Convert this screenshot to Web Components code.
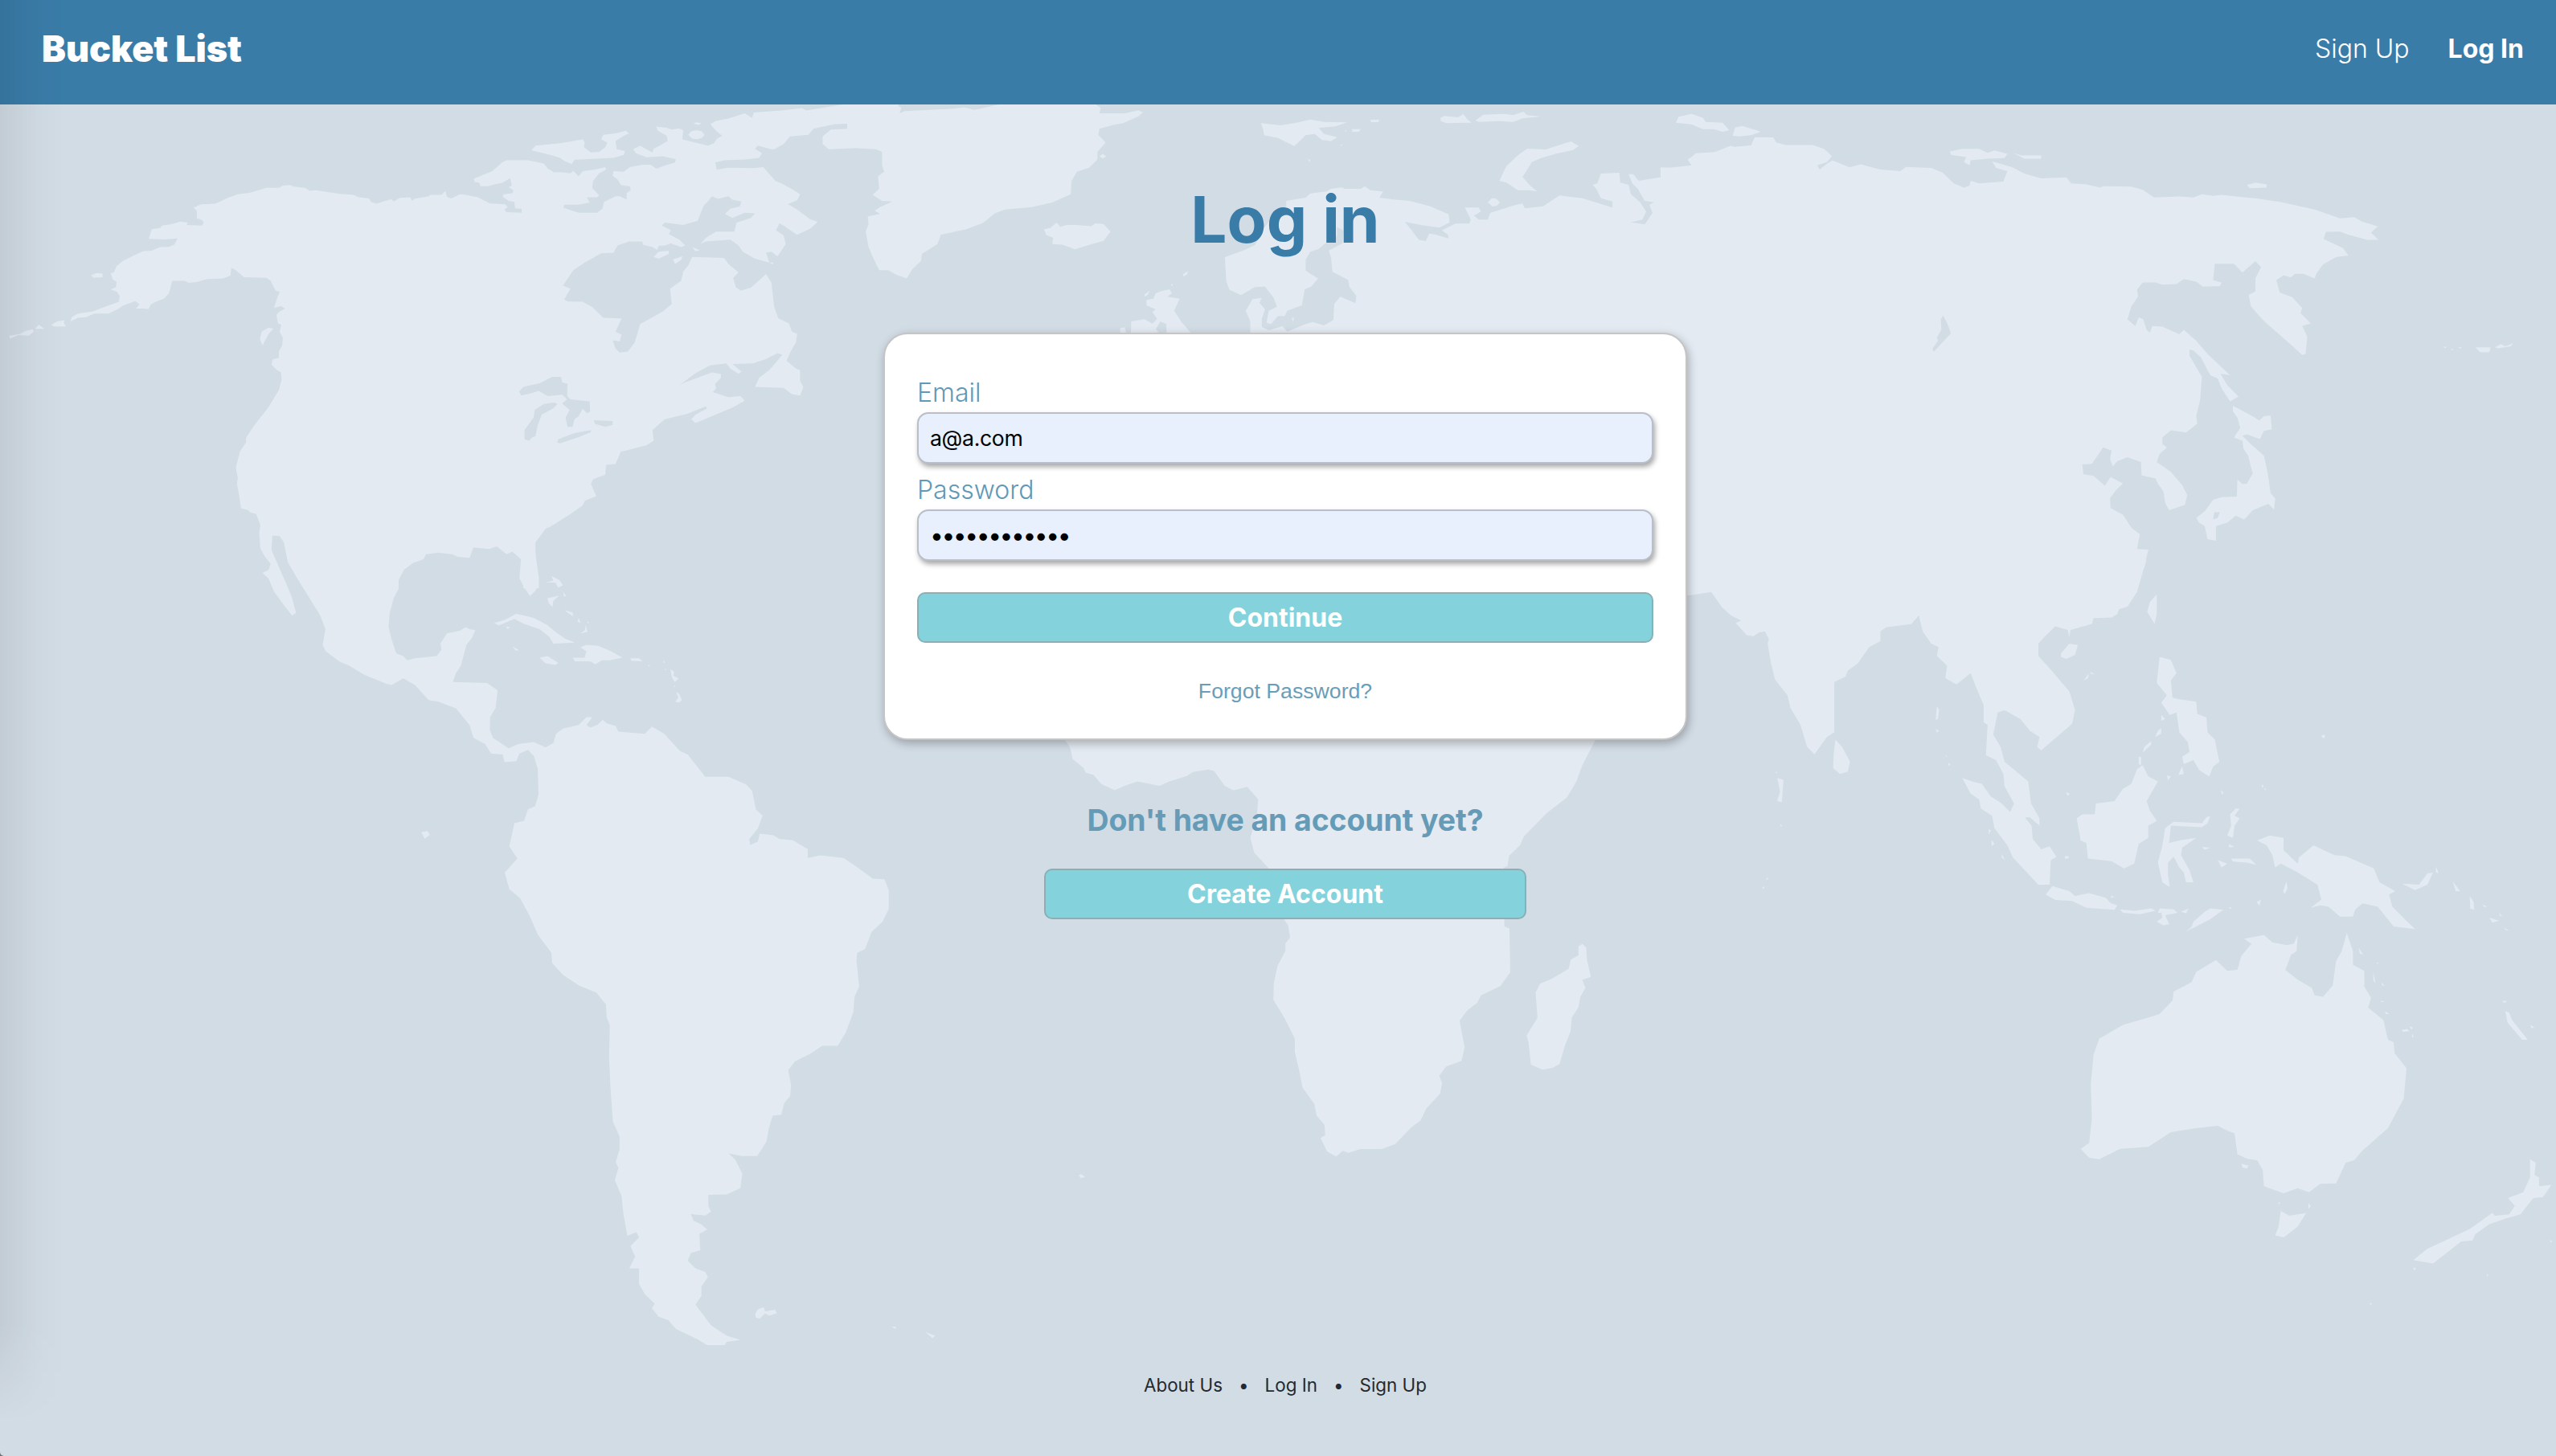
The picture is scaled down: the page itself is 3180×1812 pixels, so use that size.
<!DOCTYPE html>
<html lang="en">
<head>
<meta charset="utf-8">
<title>Bucket List</title>
<style>
html,body{margin:0;height:100%;overflow:hidden;background:#6b7177;font-family:Inter,"Liberation Sans",sans-serif}
</style>
</head>
<body>
<bucket-page>
  <bucket-header slot="header"></bucket-header>
  <login-view slot="main"></login-view>
  <bucket-footer slot="footer"></bucket-footer>
</bucket-page>
<script>
const define=(name,html)=>customElements.define(name,class extends HTMLElement{
  constructor(){super();this.attachShadow({mode:'open'}).innerHTML=html;}
});

define('world-map',`<style>:host{display:block;width:100%;height:100%}svg{display:block}.l{fill:#e3eaf1}.w{fill:#d2dce5}</style>
<svg width="3180" height="1812" viewBox="0 0 3180 1812" aria-hidden="true">
<g class="l" transform="translate(0 120) scale(.510204 .382653)">
<path d="M1290 208L1235 208 1225 214 1200 243 1155 268 1158 278 1168 280 1172 292 1190 292 1210 285 1225 281 1244 266 1248 290 1240 295 1252 305 1250 315 1228 318 1226 326 1240 340 1254 343 1256 364 1272 366 1272 378 1235 376 1230 368 1238 360 1232 351 1195 348 1165 328 1135 320 1122 318 1100 332 1090 326 1086 308 1076 320 1050 320 1045 325 1010 333 1005 340 1000 328 975 330 960 342 955 334 940 340 918 349 905 343 900 332 875 328 862 320 828 317 770 305 755 307 745 298 715 293 708 288 690 290 680 297 650 297 610 313 580 318 555 330 540 340 525 349 490 351 472 362 480 372 480 396 492 402 497 410 492 420 455 418 458 410 440 407 420 415 395 420 390 428 370 432 363 463 400 465 433 462 425 482 410 490 390 490 370 502 350 503 325 518 300 535 284 552 278 572 270 575 275 595 284 603 283 620 270 628 285 635 292 650 290 668 255 685 225 700 190 706 175 718 172 732 190 720 210 718 230 706 265 706 290 690 300 680 330 666 340 676 332 690 350 690 362 692 368 676 385 665 400 658 412 640 420 600 450 600 460 606 480 604 505 594 545 592 562 582 564 558 575 565 595 588 650 590 660 600 672 632 682 635 676 655 668 688 685 682 695 690 680 702 674 710 678 738 686 742 682 765 690 785 688 810 680 830 680 850 665 855 662 872 675 890 685 897 687 920 680 955 655 1010 620 1070 600 1110 600 1125 585 1155 575 1208 580 1240 578 1260 582 1290 588 1340 605 1345 610 1353 625 1358 635 1395 632 1420 635 1470 645 1495 660 1520 655 1540 640 1550 655 1568 668 1610 690 1650 712 1688 722 1680 712 1630 695 1575 680 1530 662 1475 664 1428 682 1430 692 1450 702 1515 725 1568 740 1600 770 1665 784 1694 800 1700 800 1460 1290 1460Z"/>
<path d="M160 745L155 737 158 728 140 732 125 742 130 748 160 748ZM95 742L108 756 85 756ZM80 757L60 764 50 772 22 778 25 788 45 776 70 778 82 765ZM250 576L235 574 222 582 228 590 250 588ZM667 755L655 752 638 765 634 790 640 810 648 790 655 772Z"/>
</g>
<g transform="translate(600 120) scale(.510204 .382653)">
<path class="l" d="M100 208L120 210 150 218 160 235 175 247 195 247 215 250 222 242 235 260 245 243 275 238 300 230 302 238 285 250 270 275 268 298 285 322 280 328 255 328 262 345 235 352 200 352 198 362 235 378 280 378 293 365 297 343 325 325 335 325 352 335 352 315 362 305 360 293 338 288 330 270 318 258 320 243 345 245 360 230 390 222 410 222 425 235 445 225 470 215 472 204 440 195 400 198 375 185 368 172 385 160 400 172 415 182 418 170 430 162 452 145 450 128 428 112 424 98 450 102 462 108 480 104 490 110 488 140 520 150 550 160 565 152 572 138 585 128 570 112 556 90 570 80 600 72 640 55 658 70 662 52 730 46 780 38 790 46 835 36 880 26 900 20 900 88 860 90 808 105 795 125 750 130 735 155 712 172 705 172 672 160 665 170 682 185 675 200 640 205 590 208 568 215 572 238 600 232 660 233 685 230 715 275 730 283 760 305 775 318 768 338 745 350 765 365 785 385 800 400 818 408 800 430 768 450 745 430 735 420 725 413 716 435 735 452 740 480 720 520 705 505 692 508 700 540 665 528 635 505 625 485 605 466 545 472 532 480 545 460 570 440 615 440 620 410 655 395 665 380 640 378 610 395 592 382 605 365 628 358 632 342 610 336 600 325 575 333 560 325 548 345 540 355 525 405 505 412 490 418 445 410 438 420 460 435 455 448 480 465 495 485 485 490 460 478 445 485 430 486 427 500 415 490 392 482 390 472 358 472 330 485 320 508 290 510 250 540 222 565 197 615 215 625 200 660 208 667 245 668 268 685 295 720 340 722 325 765 340 775 335 797 318 793 325 820 335 833 355 830 372 800 385 740 410 722 440 700 462 675 458 625 485 600 490 570 502 550 512 522 590 525 600 545 625 572 612 590 618 620 630 632 655 622 692 578 705 605 712 685 722 722 748 738 755 765 768 772 765 800 752 830 742 860 765 885 775 890 775 925 783 945 775 973 755 968 735 948 665 945 675 915 700 890 732 840 720 835 690 855 660 868 610 870 632 895 625 902 605 885 595 868 555 875 520 900 480 940 495 930 560 898 582 903 582 915 568 935 570 950 562 962 600 978 630 975 640 990 610 1012 520 1062 510 1050 520 1035 548 1015 545 1008 500 1032 445 1050 415 1085 418 1120 400 1135 350 1152 338 1155 325 1195 302 1198 300 1230 270 1245 265 1260 278 1300 250 1315 245 1330 215 1358 165 1400 155 1405 130 1450 128 1480 138 1568 138 1600 100 1600Z"/>
<path class="l" d="M120 175L130 160 190 152 245 140 250 150 248 165 265 182 285 180 300 165 305 150 290 140 295 125 325 120 350 112 358 120 345 128 325 145 328 172 348 178 345 190 320 200 225 206 218 220 200 210 190 200 160 188 135 180ZM418 522L430 505 455 502 455 512 430 528ZM465 530L488 520 485 532 470 545ZM512 490L530 500 520 504ZM700 540L710 540 708 546ZM542 125L535 113 522 110 510 113 502 125 512 137 525 139 535 135ZM514 88L522 84 534 87 528 93ZM1505 195L1513 187 1522 195 1513 202Z"/>
<path class="l" d="M890 20L1015 20 1015 32 1022 36 1018 55 1030 48 1150 40 1175 35 1200 44 1240 36 1280 26 1480 26 1508 38 1505 55 1568 55 1600 45 1611 52 1600 65 1563 87 1540 92 1505 105 1502 125 1520 150 1500 180 1500 205 1480 232 1450 245 1437 275 1435 318 1390 345 1340 360 1275 368 1250 380 1220 412 1180 432 1118 450 1110 480 1072 512 1070 535 1050 560 1035 592 1010 580 990 565 968 565 955 530 942 490 935 440 942 415 940 390 970 382 957 372 970 360 1000 342 975 340 952 320 968 300 965 260 980 245 975 225 975 180 960 172 910 168 845 172 830 155 830 130 850 108 890 105ZM1370 432L1385 428 1400 410 1410 424 1425 418 1450 418 1485 422 1495 413 1515 415 1532 440 1515 470 1475 485 1445 497 1415 482 1390 480 1392 460 1375 450ZM1200 44L1280 20 1490 20 1508 38Z"/>
<path class="w" d="M90 960L100 945 140 933 170 912 192 912 195 930 208 935 207 975 215 985 262 992 263 1025 255 1030 245 1015 235 1040 225 1050 220 1075 208 1075 203 1045 213 1020 195 998 207 985 195 970 160 975 138 958 120 965 95 973ZM183 1000L172 1015 145 1035 135 1070 130 1105 120 1110 115 1120 103 1115 103 1085 125 1045 128 1020 150 1000 175 996ZM183 1125L185 1115 225 1095 265 1085 265 1092 235 1108 190 1128ZM272 1053L318 1056 318 1068 300 1075 275 1065Z"/>
</g>
<g class="l" transform="translate(400 680) scale(.484731 .644122)">
<path d="M-5 -15L548 -15 550 20 558 62 550 85 535 96 525 85 508 62 512 25 490 10 475 15 450 0 430 5 390 2 380 22 350 20 335 15 300 12 268 15 262 25 235 32 212 45 198 65 198 82 185 100 175 130 172 155 180 180 192 207 210 212 220 220 240 216 295 212 308 200 305 188 322 168 355 163 370 156 380 160 395 162 385 178 372 190 358 230 345 245 337 262 425 264 452 278 447 312 433 330 432 355 440 370 480 390 505 382 545 378 575 388 595 380 602 362 620 352 660 345 680 330 695 330 680 345 690 350 708 345 722 335 732 342 755 347 762 358 830 362 848 348 880 362 895 375 920 395 940 402 985 445 1045 445 1090 460 1105 472 1115 508 1132 520 1120 545 1098 565 1100 577 1120 570 1125 555 1160 558 1175 565 1210 568 1248 585 1248 602 1280 597 1340 602 1375 620 1415 642 1445 643 1456 665 1456 700 1440 725 1412 745 1395 778 1375 785 1373 800 1380 850 1368 870 1365 900 1345 940 1325 965 1285 965 1255 980 1215 995 1198 1012 1205 1040 1203 1062 1188 1075 1180 1098 1158 1100 1148 1125 1142 1150 1118 1178 1080 1178 1045 1173 1062 1185 1080 1212 1075 1240 1040 1252 993 1253 993 1275 1000 1285 985 1293 948 1290 955 1303 975 1310 990 1320 970 1328 972 1360 948 1365 940 1380 960 1395 985 1402 992 1412 975 1430 975 1448 960 1465 1000 1505 1040 1525 1075 1533 1040 1537 1035 1543 990 1543 965 1532 910 1512 890 1495 865 1488 848 1472 855 1463 830 1445 815 1425 815 1395 790 1395 805 1372 793 1352 815 1335 808 1325 785 1332 775 1290 770 1255 753 1225 762 1200 755 1190 765 1165 765 1140 748 1112 742 1050 738 985 740 925 732 910 730 885 705 862 660 848 620 828 592 805 590 785 555 750 535 715 510 680 482 662 470 630 503 603 482 580 495 535 520 530 530 508 548 502 557 480 555 430 545 405 530 393 508 400 500 415 470 417 465 402 435 400 420 382 390 370 380 345 345 313 300 300 275 297 240 268 210 255 180 268 165 265 110 248 70 230 45 222 10 202 3 190 10 160 -5 130Z"/>
<path d="M443 148L470 142 500 130 545 138 580 152 600 165 625 178 650 186 595 188 585 175 560 160 520 150 495 140 455 153ZM645 215L675 215 680 203 665 195 680 190 710 192 745 203 772 215 740 220 720 220 703 228 690 222 650 222ZM560 215L580 212 608 225 600 229 575 226ZM793 216L815 216 825 222 795 221ZM575 70L595 66 590 57 610 65 620 75 608 80 600 70ZM580 100L610 95 595 105 593 117 583 110ZM620 88L628 96 622 97ZM625 123L645 128 645 135 628 126ZM660 138L665 148 657 145ZM682 145L687 147 683 149ZM665 168L676 162 678 152 683 165ZM473 155L484 156 478 160ZM490 193L508 201 498 201ZM877 220L882 224 878 225ZM882 236L886 238 882 240ZM838 229L844 230 840 232ZM895 237L905 242 903 250 917 255 907 262 900 254ZM905 268L908 270 905 273ZM910 281L918 285 925 297 918 302 908 300 916 292ZM256 552L272 550 278 557 265 565ZM1113 1483L1120 1474 1135 1470 1138 1478 1165 1475 1168 1482 1150 1486 1138 1482 1125 1492 1115 1490ZM1463 1507L1475 1508 1472 1512ZM1550 1518L1575 1525 1568 1530ZM1943 1215L1950 1213 1960 1218 1950 1221Z"/>
</g>
<g class="l" transform="translate(1280 120) scale(.573987 .333333)">
<path d="M480 960L480 840 470 800 485 757 505 752 500 770 512 795 505 830 505 860 520 872 550 858 560 878 600 850 615 842 640 855 660 835 662 775 675 748 708 772 710 745 695 712 692 685 658 655 655 600 650 575 680 548 682 500 668 488 668 520 640 552 628 570 610 580 600 610 600 650 627 680 612 710 598 720 592 780 560 800 555 820 540 820 525 850 515 845 520 800 538 785 530 750 512 710 490 712 460 742 435 722 428 690 425 600 465 575 490 555 498 530 510 490 530 450 558 410 558 390 600 378 610 362 645 355 655 345 678 340 685 345 720 345 728 335 740 350 768 355 760 378 790 385 825 390 870 410 910 440 912 470 890 490 850 480 815 468 830 500 845 535 860 540 868 512 880 515 910 530 908 515 895 500 925 475 955 475 958 460 945 415 975 415 980 430 965 445 975 460 995 460 1000 435 1055 405 1070 400 1075 418 1115 410 1150 370 1200 380 1265 415 1265 392 1240 380 1230 345 1222 330 1232 325 1240 288 1280 285 1282 322 1300 330 1305 365 1325 395 1338 430 1330 460 1305 470 1335 478 1352 435 1345 405 1355 395 1335 390 1320 345 1308 325 1300 290 1310 290 1322 315 1375 300 1378 290 1368 270 1435 262 1440 245 1430 238 1445 212 1490 208 1520 190 1568 182 1568 960Z"/>
<path d="M503 100L545 108 580 98 610 86 640 95 690 97 665 112 628 118 640 140 668 152 655 167 635 162 620 140 600 145 585 170 575 185 540 155 510 145 508 125ZM740 88L760 86 758 96 742 96ZM700 122L720 122 715 132 702 132ZM605 235L610 236 609 246ZM675 180L679 180 677 186ZM684 127L690 128 687 132ZM892 80L900 73 930 78 942 66 950 85 960 98 905 100 893 92ZM968 90L985 68 1030 65 1050 70 1072 57 1080 70 1110 75 1070 82 1050 95 1020 92 975 95ZM1020 315L1035 260 1060 220 1080 195 1120 198 1175 168 1192 185 1180 200 1145 213 1110 230 1090 245 1080 275 1070 300 1085 330 1102 355 1085 350 1060 350 1035 322ZM995 395L1003 380 1013 382 1021 395 1015 408 1005 411ZM570 828L575 825 573 842ZM275 735L285 728 305 720 310 735 300 748 327 755 315 800 330 840 355 890 350 960 300 960 298 850 285 840 275 870 282 880 262 885 255 960 220 960 222 840 250 832 268 848 278 830 268 805 275 795 255 780 255 760 270 755ZM198 865L208 862 212 890 198 890ZM333 665L345 652 343 665 336 672ZM250 740L262 725 258 740 252 748ZM308 703L312 700 311 710Z"/>
</g>
<g transform="translate(2080 120) scale(.701509 .408163)">
<path class="l" d="M-20 217L0 217 35 210 28 192 45 175 75 170 105 150 118 160 140 150 147 125 180 125 185 140 202 148 250 148 270 160 284 182 275 200 258 210 262 223 275 205 285 195 315 216 335 207 370 223 405 228 415 215 460 218 480 232 500 265 518 278 528 272 530 257 545 265 588 260 595 228 575 218 568 198 605 217 625 235 655 250 700 247 708 265 735 268 760 278 765 274 815 275 835 285 855 308 900 305 925 308 940 298 960 303 975 300 1040 312 1080 322 1140 345 1185 372 1210 368 1225 382 1252 396 1240 415 1253 437 1235 438 1200 422 1185 412 1160 413 1156 435 1190 462 1200 485 1178 490 1155 512 1143 540 1140 555 1120 541 1105 541 1098 552 1085 545 1072 560 1078 598 1100 612 1118 645 1115 660 1133 692 1118 700 1127 732 1124 785 1118 788 1090 745 1050 685 1027 640 1023 605 1035 595 1035 555 1045 520 1035 502 1012 537 997 510 963 510 960 560 975 568 972 578 942 580 930 565 908 557 895 572 870 574 858 567 835 567 825 590 827 610 815 640 808 680 822 700 828 674 836 680 842 712 848 720 852 700 870 702 900 725 908 712 930 745 950 785 990 850 973 845 985 880 1005 915 990 930 975 890 968 860 955 850 938 795 925 775 918 772 918 790 940 855 937 925 930 975 932 998 912 1025 885 1018 870 1040 870 1060 878 1070 865 1090 860 1115 885 1145 905 1185 914 1215 910 1245 882 1262 875 1240 872 1205 862 1180 858 1165 833 1155 832 1115 808 1100 790 1112 782 1128 777 1105 780 1080 765 1070 755 1095 745 1120 728 1122 730 1152 748 1157 768 1187 778 1160 800 1180 788 1200 777 1225 778 1255 800 1275 815 1315 830 1335 825 1380 845 1382 838 1435 -20 1435Z"/>
<path class="l" d="M7 80L12 62 35 53 55 65 60 78 90 80 102 103 90 108 75 100 55 100 35 85ZM108 120L112 95 125 90 158 108 140 118 120 122ZM995 943L1030 975 1042 988 1050 975 1062 973 1064 1015 1050 1020 1043 1045 1020 1030 1012 1035 1030 1065 1050 1095 1057 1150 1062 1210 1070 1225 1068 1260 1058 1242 1030 1262 1015 1290 1000 1278 985 1300 965 1310 965 1355 950 1350 945 1310 935 1300 930 1285 945 1265 960 1230 975 1222 1002 1220 1003 1168 1012 1182 1020 1180 1030 1150 1022 1095 1014 1075 1012 1050 997 1040 1008 1010 1003 980 995 960ZM493 168L515 160 545 160 560 172 572 165 595 175 590 188 560 190 530 195 528 210 518 200 522 185 495 178ZM605 172L620 180 655 180 655 190 625 190ZM1020 270L1035 263 1055 268 1055 278 1025 280ZM1425 765L1452 765 1450 780 1433 780ZM1460 765L1470 755 1478 762 1492 752 1488 762 1465 768ZM1368 763L1374 764 1372 768ZM1382 768L1386 772 1384 775ZM1395 765L1400 763 1399 769Z"/>
<path class="w" d="M481 668L488 690 495 722 480 750 465 778 462 770 472 745 470 735 478 712 477 680ZM962 1268L972 1268 968 1285 960 1290Z"/>
</g>
<g class="l" transform="translate(2080 700) scale(.701509 .61225)">
<path d="M-20 -5L842 -5 835 20 825 60 808 90 793 95 790 105 780 112 748 113 745 125 707 137 705 152 702 137 680 130 662 150 650 165 650 190 670 215 705 262 715 300 710 328 672 365 655 382 648 375 652 355 635 342 618 318 590 300 578 305 570 350 583 375 590 405 632 445 637 490 652 520 652 535 635 518 626 518 638 535 640 562 655 583 670 577 682 598 672 605 670 655 650 655 605 600 595 575 572 540 568 515 548 500 545 482 530 470 515 438 535 446 550 450 565 475 585 490 600 507 607 490 590 455 588 430 575 402 557 392 560 330 553 325 553 290 540 255 530 225 505 248 485 235 488 210 470 190 473 172 460 165 445 140 438 108 425 125 380 132 370 140 370 160 350 172 330 205 312 220 308 232 288 243 288 345 275 355 253 390 240 375 228 330 210 295 205 270 183 238 175 200 170 165 172 155 165 140 155 142 145 150 133 148 113 123 123 118 105 108 88 90 70 60 30 67 -20 67Z"/>
<path d="M290 360L302 375 316 405 312 425 298 430 286 418 287 390ZM690 185L705 165 720 168 715 188 700 196 690 192ZM860 65L860 105 856 125 843 100 848 80ZM865 192L885 198 895 225 885 240 888 275 900 278 930 283 932 308 948 315 950 345 963 360 971 405 960 415 953 435 935 422 925 402 908 410 905 395 918 385 915 365 900 345 895 305 883 310 868 285 878 270 860 245ZM868 337L868 348 857 355 862 342ZM850 363L850 370 835 387 838 375ZM828 395L832 395 832 412 828 410ZM868 310L875 318 868 322ZM905 415L908 430 898 432ZM878 433L885 435 880 443ZM835 412L845 435 862 445 842 485 848 505 860 525 845 535 845 560 828 572 820 612 802 622 780 607 738 602 735 570 725 565 718 520 728 512 750 512 752 490 785 485 800 460 815 450 825 420ZM955 515L950 530 940 538 885 535 882 570 905 564 930 560 905 580 903 595 918 625 925 650 912 650 908 630 900 620 890 598 880 610 880 635 883 660 870 650 862 610 870 575 875 540 890 527 940 530 948 518ZM1000 500L1007 500 998 515 1007 520 998 535 995 560 985 555 992 535 990 512ZM988 572L998 578 988 579ZM663 675L675 658 705 668 715 678 740 672 770 682 778 692 790 697 785 706 735 702 710 688 680 686ZM778 677L785 680 780 682ZM795 705L820 708 850 703 858 708 830 715 800 712ZM865 703L890 705 897 712 875 717 882 735 872 738 860 730 870 722 868 712 862 712ZM903 710L917 703 912 713ZM912 750L922 740 925 730 945 710 955 703 978 706 955 725 930 740ZM992 602L1025 602 1037 615 1020 610 995 608ZM968 605L985 612 975 620ZM940 578L955 580 945 584ZM990 700L993 703 988 704ZM1045 685L1042 698 1037 690ZM1090 648L1092 662 1087 674 1084 668ZM1038 565L1060 555 1085 560 1085 585 1110 612 1112 600 1138 575 1175 595 1195 597 1245 622 1255 650 1283 668 1272 675 1278 700 1300 725 1318 745 1280 740 1252 700 1225 693 1212 705 1208 720 1185 720 1165 700 1150 697 1133 702 1152 685 1145 655 1110 630 1080 612 1070 620 1065 595 1055 575ZM1295 653L1325 655 1340 632 1350 630 1340 655 1318 666ZM1355 618L1360 632 1355 630ZM1385 648L1398 668 1390 668ZM1415 678L1422 690 1423 706 1416 704ZM1438 695L1446 700 1440 700ZM1450 722L1467 728 1455 732ZM1468 712L1473 720 1468 718ZM1475 742L1485 748 1480 748ZM1478 912L1485 915 1490 930 1518 970 1508 970 1482 935ZM1472 892L1480 890 1478 896ZM1522 940L1530 945 1525 947ZM697 597L704 597 703 602 697 602ZM699 467L706 470 702 475ZM470 292L474 300 472 318 468 320ZM468 338L474 342 470 346ZM490 407L494 410 491 414ZM486 390L488 395 486 395ZM187 438L198 442 195 487 187 485 192 465ZM184 425L188 427 185 429ZM192 532L196 535 193 537ZM160 662L164 658 163 664ZM168 640L172 643 168 645ZM730 240L740 225 738 235ZM743 222L750 228 742 226ZM562 542L566 545 562 553ZM567 563L572 572 567 577ZM585 592L591 606 585 600ZM1152 352L1158 350 1158 356 1154 357ZM1046 450L1050 455 1047 458ZM1050 458L1055 462 1051 462ZM974 462L978 468 975 472ZM1218 783L1226 797 1220 795ZM1244 833L1248 855 1244 850ZM1258 890L1264 893 1258 894ZM1265 912L1272 918 1266 918ZM1258 853L1264 860 1260 860ZM1295 950L1304 948 1308 953 1296 954ZM1308 943L1314 945 1312 950ZM1313 957L1316 965 1313 965ZM1250 812L1253 814 1251 817ZM1010 1222L1023 1226 1020 1232 1012 1230Z"/>
<path d="M1197 753L1208 790 1208 818 1228 830 1228 862 1240 885 1235 905 1262 930 1270 970 1280 975 1282 998 1303 1028 1298 1090 1270 1150 1225 1195 1210 1215 1195 1220 1178 1262 1150 1263 1130 1280 1110 1272 1085 1282 1050 1268 1048 1235 1038 1215 1020 1212 1003 1203 998 1160 985 1155 968 1145 930 1150 885 1158 845 1188 795 1192 758 1213 740 1210 725 1192 740 1180 745 1130 743 1060 748 1000 758 968 800 940 830 930 865 918 888 890 890 872 922 853 930 832 965 808 985 830 1003 828 1010 800 1028 775 1015 765 1050 757 1065 772 1090 778 1103 775 1110 757 1108 790 1098 798 1088 828 1110 848 1135 865 1140 880 1155 883 1172 860 1178 810 1188 790ZM1080 1318L1095 1328 1125 1322 1110 1350 1085 1372 1070 1368 1076 1350ZM1129 1302L1133 1308 1129 1315ZM1076 1298L1079 1303 1076 1305ZM1522 1213L1532 1220 1530 1245 1538 1250 1538 1268 1560 1265 1545 1290 1528 1292 1505 1325 1480 1333 1450 1345 1425 1365 1420 1378 1400 1380 1350 1425 1315 1418 1340 1395 1415 1355 1455 1322 1460 1328 1485 1325 1495 1308 1483 1292 1510 1280 1522 1250ZM1315 1433L1320 1435 1316 1439ZM1445 1446L1448 1448 1446 1452ZM1237 1504L1242 1507 1239 1509ZM1557 1377L1562 1380 1558 1382Z"/>
</g>
<g class="l" transform="translate(1290 880) scale(.484731 .369904)">
<path d="M75 60L72 110 85 135 92 175 120 205 125 220 145 228 165 258 200 280 225 265 258 250 315 265 340 250 385 232 400 218 440 210 455 215 482 265 505 280 540 268 568 310 565 360 548 440 558 490 595 542 635 715 645 735 650 775 638 795 638 820 618 870 608 930 607 985 635 1045 662 1115 662 1160 672 1215 682 1280 712 1335 718 1375 738 1405 740 1440 728 1450 745 1495 768 1512 785 1493 800 1500 830 1487 885 1487 920 1470 960 1415 985 1390 1000 1350 1035 1300 1040 1265 1033 1240 1050 1210 1090 1190 1098 1145 1085 1055 1105 1020 1130 995 1140 970 1190 938 1215 892 1213 745 1200 738 1198 540 1208 535 1212 500 1240 465 1250 435 1310 355 1360 305 1385 250 1400 195 1432 115 1450 60Z"/>
<path d="M1400 797L1410 808 1412 850 1422 908 1400 918 1408 945 1395 975 1390 1010 1373 1045 1370 1090 1355 1140 1342 1200 1325 1213 1298 1220 1268 1203 1262 1130 1257 1105 1285 1045 1280 960 1292 930 1320 915 1365 880 1370 850 1390 835 1390 805Z"/>
</g>
</svg>`);

define('bucket-page',`<style>
:host{display:grid;grid-template:1fr/1fr;width:3180px;height:1812px;overflow:hidden;background:#d2dce5;border-bottom-left-radius:5px}
world-map,.page,.edge{grid-area:1/1}
.page{display:flex;flex-direction:column;z-index:1}
.main{flex:1}
.edge{z-index:2;pointer-events:none;width:80px;height:1770px;background:linear-gradient(90deg,rgba(0,0,0,.07),rgba(0,0,0,.045) 30%,rgba(0,0,0,.015) 60%,transparent);-webkit-mask-image:linear-gradient(#000 93%,transparent);mask-image:linear-gradient(#000 93%,transparent)}
</style>
<world-map></world-map>
<div class="page"><slot name="header"></slot><div class="main"><slot name="main"></slot></div><slot name="footer"></slot></div>
<div class="edge"></div>`);

define('bucket-header',`<style>
:host{display:block;background:#3a7ca8;color:#fff}
header{display:flex;justify-content:space-between;align-items:center;height:130px;box-sizing:border-box;padding:0 40px 9px 52px}
.logo{font-size:44.8px;font-weight:900;line-height:54px;white-space:nowrap}
nav{display:flex;gap:48px;font-size:32px;line-height:40px}
span{font-weight:300}
b{font-weight:700}
</style>
<header><div class="logo">Bucket List</div><nav><span>Sign Up</span><b>Log In</b></nav></header>`);

define('form-field',`<style>
:host{display:block}
.label{font-size:32px;line-height:38px;font-weight:300;color:#5f99b7}
.box{box-sizing:border-box;height:64px;margin-top:5px;border:2px solid #b9bec8;border-radius:14px;background:#e8f0fe;box-shadow:2px 4px 6px rgba(0,0,0,.35);padding:0 14px;display:flex;align-items:center;font-size:26.67px;letter-spacing:-.35px;color:#000}
:host([secret]) .box{font-size:30px;letter-spacing:-2.45px}
</style>
<div class="label"><slot name="label"></slot></div><div class="box"><slot></slot></div>`);

define('teal-button',`<style>
:host{display:flex;box-sizing:border-box;height:63px;align-items:center;justify-content:center;border:2px solid #87b0b7;border-radius:10px;background:#84d3dc;color:#fff;font-size:32px;font-weight:700;line-height:40px}
</style><slot></slot>`);

define('login-card',`<style>
:host{display:flex;flex-direction:column;box-sizing:border-box;width:1000px;height:507px;border:2px solid #c5c5c6;border-radius:30px;background:#fff;padding:54px 40px 0;box-shadow:2px 4px 12px rgba(0,0,0,.28)}
form-field+form-field{margin-top:14px}
teal-button{margin-top:39px}
.forgot{margin-top:44px;text-align:center;font:26.67px/32px "Liberation Sans",Arial,sans-serif;color:#679eba}
</style>
<form-field><span slot="label">Email</span>a@a.com</form-field>
<form-field secret><span slot="label">Password</span>••••••••••••</form-field>
<teal-button>Continue</teal-button>
<div class="forgot">Forgot Password?</div>`);

define('login-view',`<style>
:host{display:flex;flex-direction:column;align-items:center;padding-left:18px}
h1{margin:94px 0 93px;font-size:80px;line-height:97px;font-weight:700;color:#3a7ca8}
h2{margin:78px 0 38px;font-size:37.44px;line-height:44px;font-weight:700;letter-spacing:-.1px;color:#659bb7}
teal-button{width:600px}
</style>
<h1>Log in</h1><login-card></login-card><h2>Don't have an account yet?</h2><teal-button>Create Account</teal-button>`);

define('bucket-footer',`<style>
:host{display:flex;justify-content:center;gap:20px;height:102px;padding-left:18px;font-size:22.4px;line-height:28px;color:#24292e}
</style><span>About Us</span><span>•</span><span>Log In</span><span>•</span><span>Sign Up</span>`);
</script>
</body>
</html>
